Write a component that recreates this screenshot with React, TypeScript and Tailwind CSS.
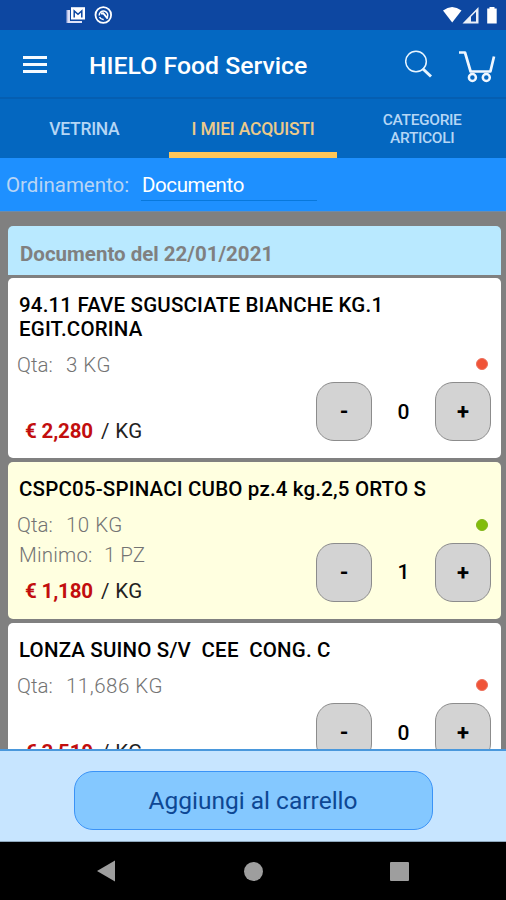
import React from "react";

type Item = {
  name: React.ReactNode;
  qty: string;
  min?: string;
  price: string;
  count: number;
  available: boolean;
  highlighted?: boolean;
  height: string;
};

const items: Item[] = [
  {
    name: (
      <>
        94.11 FAVE SGUSCIATE BIANCHE KG.1
        <br />
        EGIT.CORINA
      </>
    ),
    qty: "3 KG",
    price: "€ 2,280",
    count: 0,
    available: false,
    height: "h-[180.500px]",
  },
  {
    name: "CSPC05-SPINACI CUBO pz.4 kg.2,5 ORTO S",
    qty: "10 KG",
    min: "1 PZ",
    price: "€ 1,180",
    count: 1,
    available: true,
    highlighted: true,
    height: "h-[156.500px]",
  },
  {
    name: "LONZA SUINO S/V  CEE  CONG. C",
    qty: "11,686 KG",
    price: "€ 3,510",
    count: 0,
    available: false,
    height: "h-[157px]",
  },
];

function StatusBar() {
  return (
    <div className="flex h-[30px] shrink-0 items-center bg-[#0d47a1] pl-[66px] pr-[8px]">
      <svg width="19" height="18" viewBox="0 0 19 18" fill="none">
        <path d="M.5 4H4v13H.5z" fill="#b9c0e6" />
        <path d="M3 4v12h13" stroke="#dfe3f8" strokeWidth="1.8" />
        <path d="M5 1.200h14v12.300H5z" fill="#fff" />
        <path d="M8.200 11.500V5l3.800 3.300L15.800 5v6.500" stroke="#0d47a1" strokeWidth="1.500" />
      </svg>
      <svg className="ml-[9px]" width="19" height="18" viewBox="0 0 19 18" fill="none">
        <circle cx="9.300" cy="9" r="7.800" stroke="#fff" strokeWidth="1.800" />
        <path d="M5.200 9.500a4.300 4.300 0 1 1 7.600 2.500M5.500 11a4.300 4.300 0 0 0 4.200 2.400" stroke="#fff" strokeWidth="1.500" />
        <path d="M7 7.500l2.200-.3 4.500 5.500" stroke="#fff" strokeWidth="2" />
      </svg>
      <div className="flex-1" />
      <svg width="56" height="18" viewBox="0 0 56 18">
        <path d="M1 4.500Q10 -2.500 19.500 4.500L10.200 16.500z" fill="#fff" />
        <path fillRule="evenodd" d="M20.500 17.500L36.500 1v16.500zM29 10.800V15.500h5V5.800z" fill="#fff" fillOpacity=".92" />
        <path d="M29.600 11.500l3.400-3.500v6.800h-3.400z" fill="#0d47a1" />
        <path d="M47.500 1h5v1.600h2.200v15H45.200v-15h2.300z" fill="#fff" />
      </svg>
    </div>
  );
}

function AppBar() {
  return (
    <header className="flex h-[69px] shrink-0 items-center border-b-2 border-[#055eb1] bg-[#0468c2] pl-[23px] pr-[9px]">
      <div className="mt-[2px] flex w-6 flex-col gap-[4px]">
        <span className="h-[3px] bg-[#f5faff]" />
        <span className="h-[3px] bg-[#f5faff]" />
        <span className="h-[3px] bg-[#f5faff]" />
      </div>
      <h1 className="ml-[42px] mt-[5px] whitespace-nowrap text-[24.800px] font-medium leading-8 text-white">
        HIELO Food Service
      </h1>
      <div className="flex-1" />
      <svg width="28" height="28" viewBox="0 0 28 28" fill="none" stroke="#e8f5ff">
        <circle cx="11" cy="11.500" r="10.300" strokeWidth="1.500" />
        <path d="M17.500 18.500l8.500 8" strokeWidth="3" />
      </svg>
      <svg className="ml-[26px] mt-[6px]" width="38" height="34" viewBox="0 0 38 34" fill="none" stroke="#f0f7ff">
        <path d="M0 2.500h6l5.600 19h19.800L35 6.500" strokeWidth="2.700" strokeLinejoin="round" />
        <circle cx="13.400" cy="27.500" r="3.500" strokeWidth="2.500" />
        <circle cx="27.300" cy="27.500" r="3.500" strokeWidth="2.500" />
      </svg>
    </header>
  );
}

function Tabs() {
  return (
    <nav className="grid h-[59px] shrink-0 grid-cols-3 bg-[#0467c0] text-center font-medium text-[#b5d6f5]">
      <div className="flex items-center justify-center pt-[2px] text-[17.500px] tracking-[-0.280px]">VETRINA</div>
      <div className="flex items-center justify-center whitespace-nowrap border-b-6 border-[#ffc658] pt-[8px] text-[17.500px] tracking-[-0.230px] text-[#ecca8b]">
        I MIEI ACQUISTI
      </div>
      <div className="flex items-center justify-center pl-[1px] pt-[1px] text-[15.500px] leading-[18px] tracking-[-0.350px]">
        CATEGORIE
        <br />
        ARTICOLI
      </div>
    </nav>
  );
}

function SortBar() {
  return (
    <div className="flex h-[53px] shrink-0 bg-[#1e90ff] pl-[6px] text-[20.500px] leading-6">
      <span className="mt-[15px] w-[135px] whitespace-nowrap text-[#b8d5f5]">Ordinamento:</span>
      <div className="mt-[15px] h-[28px] w-[176px] border-b border-[#0878dc] pl-[1px] tracking-[-0.400px] text-white">
        Documento
      </div>
    </div>
  );
}

function StepButton({ children }: { children: string }) {
  return (
    <button className="flex h-[59px] w-[56px] items-center justify-center rounded-[18px] border border-[#8c8c8c] bg-[#d3d3d3] text-[22px] font-bold text-black">
      {children}
    </button>
  );
}

function ItemCard({ item }: { item: Item }) {
  return (
    <article
      className={`flex shrink-0 flex-col rounded-[5px] ${item.height} ${
        item.highlighted ? "bg-[#ffffe0]" : "bg-white"
      }`}
    >
      <h2 className="ml-[11px] mt-[15px] whitespace-pre text-[20.500px] font-medium leading-[24px] tracking-[0.180px] text-black">
        {item.name}
      </h2>
      <div className="flex flex-1 justify-between">
        <div className="flex flex-col text-[20.500px] leading-6 text-[#737373]">
          <div className="mt-[12px] flex h-6 whitespace-pre pl-[9px] font-light">
            <span className="w-[49px]">Qta:</span>
            <span className="tracking-[0.500px]">{item.qty}</span>
          </div>
          <div className="mt-[6px] flex h-6 whitespace-pre pl-[11px] font-light">
            {item.min && (
              <>
                <span className="w-[85px] tracking-[0.200px]">Minimo:</span>
                <span>{item.min}</span>
              </>
            )}
          </div>
          <div className="mt-[12px] flex h-6 pl-[17px]">
            <span className="w-[76px] whitespace-nowrap font-bold tracking-[-0.150px] text-[#c20e0e]">{item.price}</span>
            <span className="whitespace-nowrap tracking-[0.400px] text-[#222]">/ KG</span>
          </div>
        </div>
        <div className="flex flex-col items-end pr-[10px]">
          <span
            className={`mr-[3px] mt-[17.500px] size-3 rounded-full border ${
              item.available ? "border-[#83b51c] bg-[#82bd0a]" : "border-[#ec705c] bg-[#f05438]"
            }`}
          />
          <div className="mt-[12px] flex items-center">
            <StepButton>-</StepButton>
            <span className="w-[63px] pt-[2px] text-center text-[21px] font-medium text-black">{item.count}</span>
            <StepButton>+</StepButton>
          </div>
        </div>
      </div>
    </article>
  );
}

function NavigationBar() {
  return (
    <div className="flex h-[58px] shrink-0 items-center bg-black pl-[96px]">
      <svg width="20" height="22" viewBox="0 0 20 22">
        <path d="M1 11L19 .5v21z" fill="#9e9e9e" />
      </svg>
      <span className="ml-[128px] size-[19px] rounded-full bg-[#9e9e9e]" />
      <span className="ml-[127px] size-[19px] rounded-[1px] bg-[#9e9e9e]" />
    </div>
  );
}

export default function App() {
  return (
    <div className="flex h-[900px] w-[506px] flex-col overflow-hidden font-['Roboto',sans-serif]">
      <StatusBar />
      <AppBar />
      <Tabs />
      <SortBar />
      <main className="flex min-h-0 flex-1 flex-col overflow-hidden border-t border-[#6f8ba8] bg-[#808080] pl-[8px] pr-[5px] pt-[14px]">
        <div className="h-[49px] shrink-0 rounded-t-[5px] bg-[#b9e9ff] pl-[12px] pt-[16px] text-[20.500px] font-bold leading-6 text-[#808080]">
          Documento del 22/01/2021
        </div>
        <div className="mt-[2.500px] flex flex-col gap-[4px]">
          {items.map((item) => (
            <ItemCard key={item.qty} item={item} />
          ))}
        </div>
      </main>
      <footer className="flex h-[93px] shrink-0 justify-center border-b border-t-2 border-b-[#8fa8bd] border-t-[#4a98dc] bg-[#c7e5ff] pt-[20px]">
        <button className="h-[59px] w-[359px] rounded-[19px] border border-[#3a93f7] bg-[#84c8ff] pt-[2px] text-[24.500px] text-[#0d4794]">
          Aggiungi al carrello
        </button>
      </footer>
      <NavigationBar />
    </div>
  );
}
